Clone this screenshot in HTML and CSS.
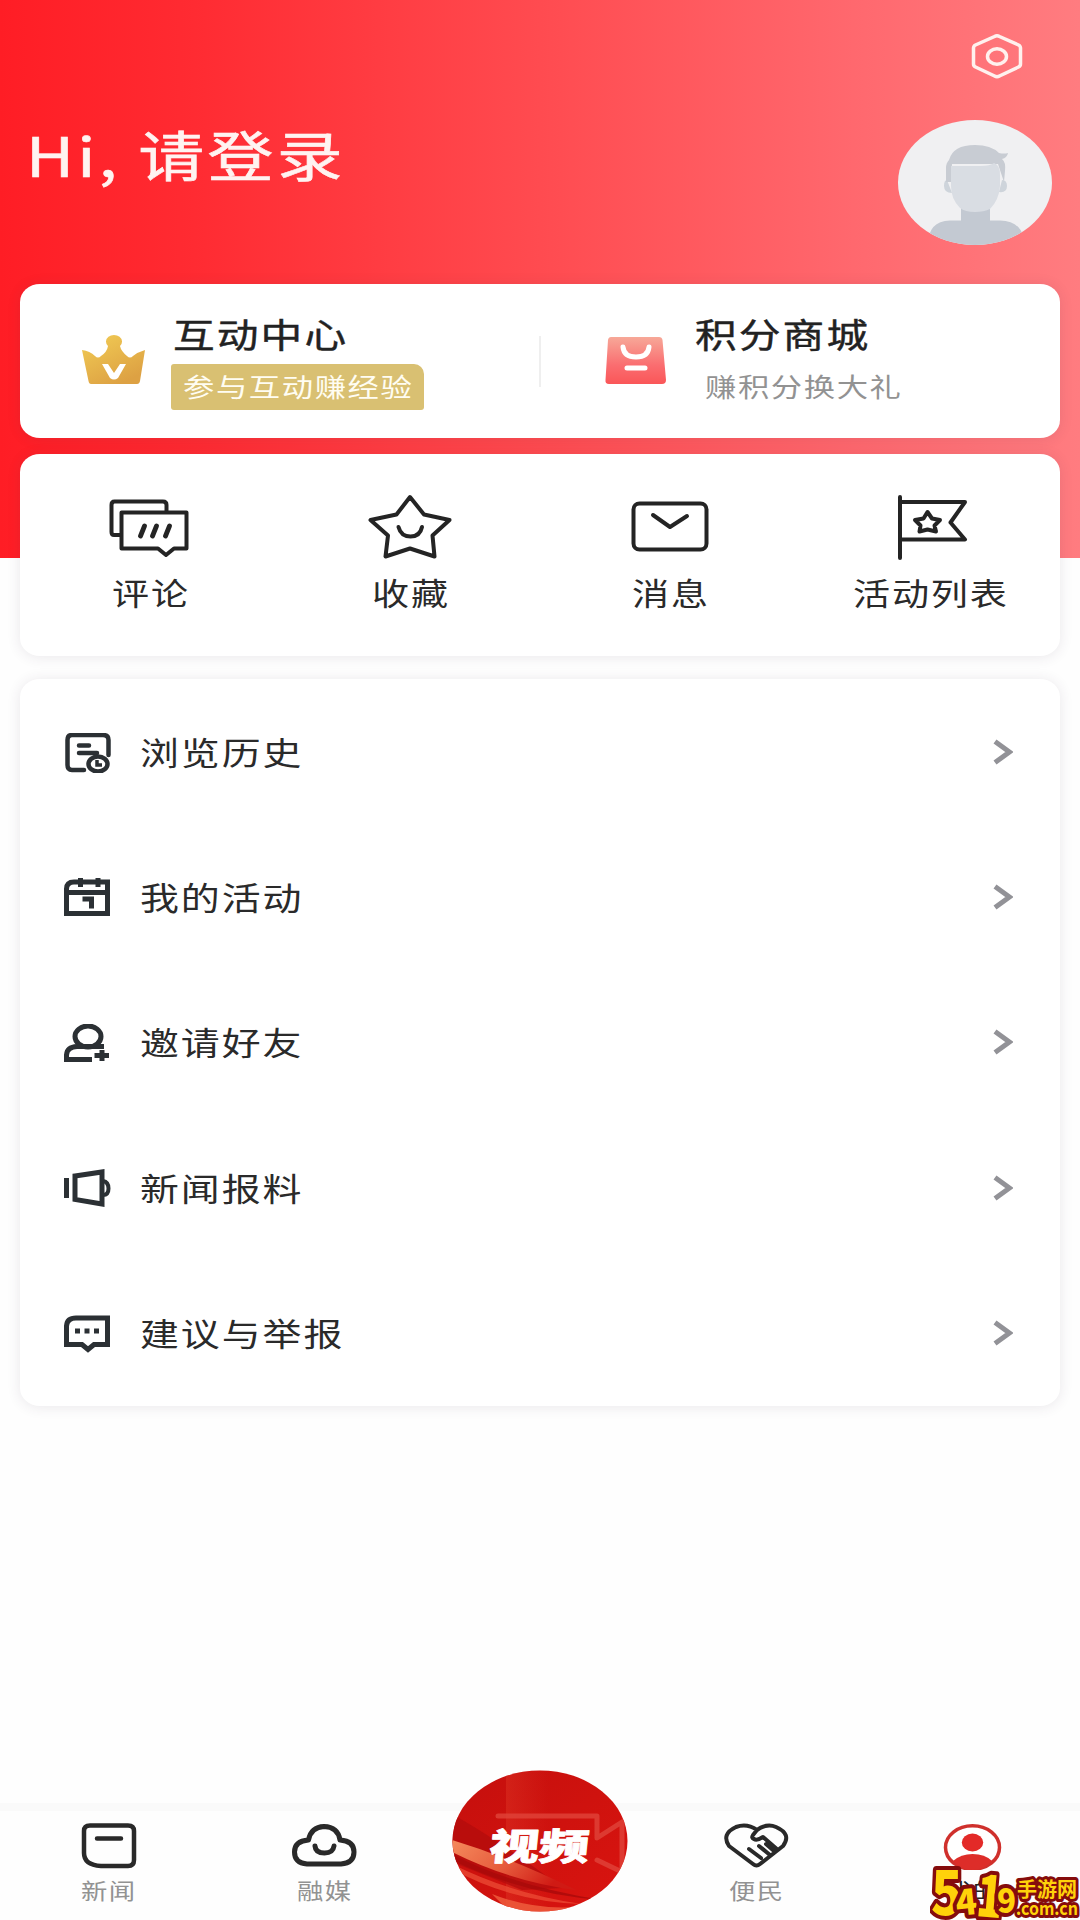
FILE: index.html
```html
<!DOCTYPE html>
<html lang="zh-CN">
<head>
<meta charset="utf-8">
<title>我的</title>
<link rel="stylesheet" href="styles.css">
</head>
<body>
<div class="page">
  <header class="hero">
    <div class="hero-top">
      <svg class="settings" viewBox="0 0 54 48"><path d="M24.500 4.500Q27 3 29.500 4.500L48.500 13Q50.500 14 50.500 16V32Q50.500 34 48.500 35L29.500 44Q27 45.500 24.500 44L5.500 35Q3.500 34 3.500 32V16Q3.500 14 5.500 13Z"/><ellipse cx="27" cy="24.500" rx="9.500" ry="7.700"/></svg>
    </div>
    <div class="hero-user">
      <h1 class="greeting"><span class="wide">Hi, 请登录</span></h1>
      <svg class="avatar" viewBox="0 0 154 125">
        <defs><clipPath id="face"><ellipse cx="77" cy="62.500" rx="77" ry="62.500"/></clipPath></defs>
        <g clip-path="url(#face)">
          <rect width="154" height="125" fill="#f0f0f2"/>
          <path d="M30 125Q30 101 52 100.500H63V85H92V100.500H102Q126 101 126 125Z" fill="#c3c9d2"/>
          <path d="M49 60Q46 60 46 66Q46 73 54 73M104 60Q109 60 109 66Q109 73 101 72" fill="#ced4db"/>
          <path d="M48 62V48Q48 43 51 40Q55 25 77 25Q93 25 101 33Q106 34 110 33Q109 38 104 39Q108 42 107 51L106 62L100 44H54L53 62Z" fill="#c8ccd3"/>
          <path d="M53 46H83Q92 46 96 43Q102 45 102 55V66Q101 80 92 89Q86 92 77 92Q67 92 62 88Q53 79 53 66Z" fill="#d9dde3"/>
        </g>
      </svg>
    </div>
  </header>

  <main class="content">
    <section class="card perks">
      <a class="perk">
        <svg class="perk-icon crown" viewBox="0 0 64 52">
          <defs><linearGradient id="gold" x1="0" y1="0" x2=".6" y2="1"><stop offset="0" stop-color="#f2cd55"/><stop offset="1" stop-color="#dda143"/></linearGradient></defs>
          <path fill="url(#gold)" d="M26 13A8 6.600 0 1 1 38 13Q39 18 45 23Q48 26 51 23Q56 19 63 17L58 48Q57.500 51 55 51H9Q7 51 6.500 48L0 17Q8 18 13 23Q16 26 19 23Q25 19 26 13Z"/>
          <path d="M20 31H26L32 40L38 31H44L36 45Q32 48 28 45Z" fill="#fff"/>
        </svg>
        <div class="perk-text"><strong class="perk-title"><span class="wide">互动中心</span></strong><span class="badge"><span class="wide">参与互动赚经验</span></span></div>
      </a>
      <i class="divider"></i>
      <a class="perk">
        <svg class="perk-icon" viewBox="0 0 64 52">
          <defs><linearGradient id="coral" x1="0" y1="0" x2="0" y2="1"><stop offset="0" stop-color="#f7a898"/><stop offset=".6" stop-color="#fa6d70"/><stop offset="1" stop-color="#fa5658"/></linearGradient></defs>
          <path fill="url(#coral)" d="M7 4H55Q58 4 58.500 7L62 47Q62 51 58 51H5Q1 51 1.500 47L4 7Q4.500 4 7 4Z"/>
          <path d="M19 14Q20 24 32 24Q44 24 45 14M23 35H41" fill="none" stroke="#fff" stroke-width="5" stroke-linecap="round"/>
        </svg>
        <div class="perk-text"><strong class="perk-title"><span class="wide">积分商城</span></strong><span class="hint"><span class="wide">赚积分换大礼</span></span></div>
      </a>
    </section>

    <nav class="card shortcuts">
      <a class="shortcut"><svg viewBox="0 0 88 68"><path d="M15 39H8Q5.500 39 5.500 36V9Q5.500 5.500 8.500 5.500H57Q60.500 5.500 60.500 9V15"/><path d="M17 16.500H80.500V52.500H68L60 59L52 52.500H15.500V16.500Z"/><path d="M38.500 30L34.500 40M50.500 30L46.500 40M63.500 30L59.500 40" stroke-width="4.800"/></svg><span class="wide">评论</span></a>
      <a class="shortcut"><svg viewBox="0 0 88 68"><path d="M44 1L58 18.500L83.500 24L66.500 39.500L68.500 60.500L44 52.500L19.500 60.500L22 39.500L4.500 24L30.500 18.500Z"/><path d="M32.500 31Q35 40.500 44.500 40.500Q54 40.500 56 31"/></svg><span class="wide">收藏</span></a>
      <a class="shortcut"><svg viewBox="0 0 88 68"><rect x="7.500" y="7.500" width="73" height="46" rx="6"/><path d="M27 19L44 31L61 20"/></svg><span class="wide">消息</span></a>
      <a class="shortcut"><svg viewBox="0 0 88 68"><path d="M14 1V62M14 6H79L64.500 26.500L79 43.500H14"/><path d="M41.500 16L46 22.500L54 24L48.500 29.500L50 35.500L41.500 33.500L33.500 35.500L34.500 29.500L29 24L37.500 22.500Z" stroke-width="4"/></svg><span class="wide">活动列表</span></a>
    </nav>

    <section class="card menu">
      <a class="row"><svg class="row-icon" viewBox="0 0 48 40"><path d="M45.500 22V7Q45.500 2 40 2H9Q4.500 2 4.500 7V32Q4.500 37 9 37H21M16 12.500H26M16 20H34" stroke-width="4.500" stroke-linecap="round"/><ellipse cx="35" cy="31" rx="9.500" ry="7.500" stroke-width="4.500"/><path d="M34 27V32H39" stroke-width="3.500"/></svg><span class="wide">浏览历史</span><svg class="chevron" viewBox="0 0 20 26"><path d="M2 2.500L16.500 13L2 23.500"/></svg></a>
      <a class="row"><svg class="row-icon" viewBox="0 0 48 40"><path d="M11 4H44.500V35.500H3.500V11Q3.500 4 11 4ZM3 14.500H45" stroke-width="5"/><path d="M17.500 0V9M35 0V9" stroke-width="5"/><path d="M19.500 21H28.500V30.500" stroke-width="5"/></svg><span class="wide">我的活动</span><svg class="chevron" viewBox="0 0 20 26"><path d="M2 2.500L16.500 13L2 23.500"/></svg></a>
      <a class="row"><svg class="row-icon" viewBox="0 0 48 40"><ellipse cx="25" cy="12.500" rx="13" ry="10.500" stroke-width="5"/><path d="M41 22.500H14Q4 23 3.500 31V35.500H29" stroke-width="5"/><path d="M31.500 31.500H46M39 26V37" stroke-width="5"/></svg><span class="wide">邀请好友</span><svg class="chevron" viewBox="0 0 20 26"><path d="M2 2.500L16.500 13L2 23.500"/></svg></a>
      <a class="row"><svg class="row-icon" viewBox="0 0 48 40"><path d="M3.500 9V29" stroke-width="5"/><path d="M12 7L39 3V35L12 30.500Z" stroke-width="5"/><path d="M40 12Q45.500 13 45.500 19.500Q45.500 26 40 26" stroke-width="4"/></svg><span class="wide">新闻报料</span><svg class="chevron" viewBox="0 0 20 26"><path d="M2 2.500L16.500 13L2 23.500"/></svg></a>
      <a class="row"><svg class="row-icon" viewBox="0 0 48 40"><path d="M13 4H44.500V30.500H31L25 35.500L19 30.500H3.500V12Q4 4 13 4Z" stroke-width="5"/><path d="M12 17H17M21.500 17H26.500M31 17H36" stroke-width="5"/></svg><span class="wide">建议与举报</span><svg class="chevron" viewBox="0 0 20 26"><path d="M2 2.500L16.500 13L2 23.500"/></svg></a>
    </section>
  </main>

  <nav class="tabs">
    <a class="tab"><svg viewBox="0 0 66 48"><path d="M15 3.500H53Q59 3.500 59 9V38Q59 44 53 44H26Q9 43 9 31V9Q9 3.500 15 3.500ZM22 16.500H46" stroke-width="4.500"/></svg><span class="wide">新闻</span></a>
    <a class="tab"><svg viewBox="0 0 66 48"><path d="M16 42H50Q63 41 63 30Q63 19 49 18Q47 5 33 4.500Q20 5 17.500 18Q3.500 19 3.500 30Q3.500 41 16 42Z" stroke-width="5"/><path d="M24 24Q24.500 31 33.500 31Q42 31 43 24" stroke-width="5"/></svg><span class="wide">融媒</span></a>
    <a class="tab tab-video">
      <svg viewBox="0 0 176 142">
        <defs>
          <linearGradient id="disc" x1="0" y1="0" x2="1" y2="1"><stop offset="0" stop-color="#c50f0d"/><stop offset=".5" stop-color="#cf120e"/><stop offset="1" stop-color="#da1410"/></linearGradient>
          <linearGradient id="ray" x1="0" y1="0" x2="1" y2=".4"><stop offset="0" stop-color="#f58a5c"/><stop offset=".55" stop-color="#e65a3c"/><stop offset="1" stop-color="#d01a14"/></linearGradient>
          <linearGradient id="beam" x1="0" y1="0" x2="1" y2="0"><stop offset="0" stop-color="#e13a28" stop-opacity=".4"/><stop offset="1" stop-color="#e13a28" stop-opacity="0"/></linearGradient>
          <clipPath id="round"><ellipse cx="88" cy="71" rx="87.500" ry="70.500"/></clipPath>
        </defs>
        <g clip-path="url(#round)">
          <rect width="176" height="142" fill="url(#disc)"/>
          <path d="M54 0H96V142H54Z" fill="url(#beam)"/>
          <path d="M0 44Q50 72 110 118L70 120L0 92Z" fill="#b40d0c" opacity=".8"/>
          <path d="M0 70Q60 88 124 120Q60 112 0 82Z" fill="url(#ray)"/>
          <path d="M0 94Q60 124 130 134Q60 132 0 99Z" fill="#ee5038" opacity=".7"/>
          <path d="M0 84Q60 116 150 130Q70 124 0 90Z" fill="#a90a0a" opacity=".8"/>
          <path d="M40 124Q80 140 124 137L110 144H60Z" fill="#f0603e" opacity=".8"/>
          <path d="M46 46H145V68L170 52V102L145 90" fill="none" stroke="#e0443a" stroke-width="5" opacity=".8"/>
        </g>
        <text class="video-label" transform="translate(36 90) skewX(-6) scale(1.350 1)">视频</text>
      </svg>
    </a>
    <a class="tab"><svg viewBox="0 0 66 48"><path d="M34 8Q24 1 13 5Q-2 12 6 24L30 42Q33.500 45 37 42L60 24Q69 12 53 5Q44 1 34 8L30 13Q28 16 31 17Q34 19 40 15L55 28M26 27L38 36M36 24L47 33M43 22L51 29" stroke-width="4"/></svg><span class="wide">便民</span></a>
    <a class="tab tab-active"><svg viewBox="0 0 66 48"><ellipse cx="33.500" cy="25.500" rx="27" ry="21.700" fill="#fff" stroke="#cf302c" stroke-width="3.500"/><ellipse cx="33.500" cy="20.500" rx="10.700" ry="9" fill="#e32a28" stroke="none"/><path d="M14 39Q22 32 33.500 32Q46 32 53 39Q45 48 33.500 48Q21 48 14 39Z" fill="#dd2d29" stroke="none"/></svg><span class="wide">我的</span></a>
  </nav>

  <svg class="watermark" viewBox="0 0 150 54">
    <g class="mark">
      <text transform="translate(1 49) scale(.860 1)" font-size="60">5</text>
      <text transform="translate(27 50) rotate(-6) scale(1 1)" font-size="35">4</text>
      <text transform="translate(45 50) rotate(5) scale(.760 1)" font-size="57">1</text>
      <text transform="translate(67 47) scale(.950 1)" font-size="33">9</text>
    </g>
    <g class="mark mark-small">
      <text x="87" y="31" font-size="20">手游网</text>
      <text x="86" y="49" font-size="18" textLength="62" lengthAdjust="spacingAndGlyphs">.com.cn</text>
    </g>
  </svg>
</div>
</body>
</html>
```
FILE: styles.css
```css
* { box-sizing: border-box; }

body {
  margin: 0;
  background: #fff;
  color: #2a2a2a;
  font-family: "Noto Sans CJK SC", "Noto Sans", sans-serif;
}

svg { display: block; flex: none; }

/* Extended letterforms */
.wide {
  display: inline-block;
  white-space: nowrap;
  letter-spacing: .05em;
  transform: scaleX(1.22);
  transform-origin: left center;
}

.page {
  position: relative;
  display: flex;
  flex-direction: column;
  width: 1080px;
  height: 1920px;
  overflow: hidden;
  background: #fefefe;
}

.hero {
  height: 558px;
  margin-bottom: -274px;
  background: linear-gradient(90deg, #ff1d25 0%, #ff2b32 18%, #ff4b50 50%, #ff696f 80%, #ff7c80 100%);
}
.hero-top { display: flex; justify-content: flex-end; padding: 32px 56px 0 0; height: 120px; }
.settings { width: 54px; height: 48px; fill: none; stroke: #fff1ee; stroke-width: 3.5; }
.hero-user { display: flex; justify-content: space-between; padding: 0 28px 0 26px; }
.greeting { margin: -3px 0 0; font-size: 54px; font-weight: 400; line-height: 74px; color: #fff3f1; -webkit-text-stroke: .6px #fff3f1; }
.avatar { width: 154px; height: 125px; }

.content { position: relative; display: flex; flex-direction: column; padding: 0 20px; }
.card {
  background: #fff;
  border-radius: 20px / 18px;
  box-shadow: 0 1px 14px rgba(60, 50, 70, .11);
}

.perks { display: flex; align-items: center; height: 154px; margin-bottom: 16px; }
.perk { display: flex; flex: 1; height: 100%; padding: 26px 0 0 62px; }
.perk-icon { width: 64px; height: 52px; margin-top: 23px; }
.perk-text { display: flex; flex-direction: column; align-items: flex-start; padding-left: 25px; }
.perk + .divider + .perk { padding-left: 63px; }
.perk-title { padding-left: 2px; font-size: 34.2px; font-weight: 400; line-height: 46px; color: #222; -webkit-text-stroke: .4px #222; }
.badge {
  width: 253px;
  height: 46px;
  margin-top: 8px;
  padding-left: 12px;
  border-radius: 3px 10px 3px 3px;
  background: #d9c072;
  color: #fffdf2;
  font-size: 25.7px;
  line-height: 44px;
}
.hint { margin-top: 8px; padding-left: 12px; font-size: 25.7px; line-height: 44px; color: #929292; }
.divider { width: 2px; height: 51px; background: #efefef; }

.shortcuts { display: grid; grid-template-columns: repeat(4, 1fr); height: 202px; margin-bottom: 23px; }
.shortcut { display: flex; flex-direction: column; align-items: center; padding-top: 42px; font-size: 30.4px; line-height: 48px; }
.shortcut svg { width: 88px; height: 68px; margin-bottom: 4px; overflow: visible; fill: none; stroke: #242424; stroke-width: 4; stroke-linecap: round; stroke-linejoin: round; }
.shortcut .wide, .tab .wide { margin-right: -.05em; transform-origin: center; }

.menu { display: flex; flex-direction: column; height: 727px; }
.row { display: flex; align-items: center; height: 145.3px; padding: 0 47px 0 43px; font-size: 31.9px; line-height: 48px; }
.row .wide { margin: -2px auto 0 29px; }
.row-icon { width: 48px; height: 40px; margin-top: 3px; fill: none; stroke: #2b3034; }
.chevron { width: 20px; height: 26px; fill: none; stroke: #929297; stroke-width: 5; }

.tabs {
  display: grid;
  grid-template-columns: repeat(5, 1fr);
  height: 117px;
  margin-top: auto;
  border-top: 8px solid #fafafa;
}
.tab { display: flex; flex-direction: column; align-items: center; padding-top: 11px; font-size: 21.6px; line-height: 32px; color: #929292; }
.tab svg { width: 66px; height: 48px; margin-bottom: 4px; fill: none; stroke: #292929; stroke-linecap: round; stroke-linejoin: round; }
.tab-video { padding: 0; }
.tab-video svg { width: 176px; height: 142px; margin-top: -41px; stroke: none; }
.video-label { font-size: 37px; font-weight: 900; fill: #fff; stroke: #fff; stroke-width: .8px; }
.tab-active { color: #222; }

/* Floats above the last tab */
.watermark { position: absolute; right: 0; bottom: 0; width: 150px; height: 54px; }
.mark { font-weight: 900; fill: #ffd20a; stroke: #850c0c; stroke-width: 8px; stroke-linejoin: round; paint-order: stroke; }
.mark-small { font-weight: 700; stroke-width: 6px; }
```
